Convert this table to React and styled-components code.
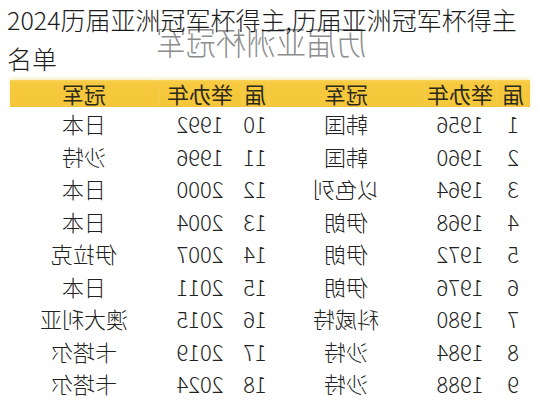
import React from "react";
import styled, { createGlobalStyle } from "styled-components";

const Global = createGlobalStyle`
  html, body { margin: 0; padding: 0; background: #ffffff; }
  body { width: 540px; height: 400px; overflow: hidden; }
`;

const Page = styled.div`
  position: relative;
  width: 540px;
  height: 400px;
  overflow: hidden;
  background: #fff;
`;

const Title = styled.h1`
  position: relative;
  z-index: 2;
  margin: 0;
  padding: 0 0 0 7px;
  font-family: "Noto Sans CJK SC", "Noto Sans", sans-serif;
  font-weight: 300;
  font-size: 25px;
  line-height: 39px;
  color: #1c1c1c;
`;

const WatermarkClip = styled.div`
  position: absolute;
  z-index: 1;
  left: 0;
  top: 29px;
  width: 540px;
  height: 30px;
  overflow: hidden;
  transform: scaleX(-1);
`;

const Watermark = styled.div`
  position: absolute;
  left: 174px;
  top: -6px;
  font-family: "Noto Sans CJK SC", sans-serif;
  font-weight: 300;
  font-size: 30px;
  line-height: 40px;
  color: #8c8c8c;
  white-space: nowrap;
  transform: scaleY(1.1);
  transform-origin: bottom;
`;

const Mirror = styled.div`
  transform: scaleX(-1);
  padding: 2px 10px 0;
`;

const Grid = styled.div`
  display: grid;
  grid-template-columns: 34px 72px 156px 26px 84px 148px;
  font-family: "Noto Sans CJK SC", sans-serif;
  font-weight: 300;
  font-size: 22px;
  color: #222;
`;

const Head = styled.div`
  height: 27px;
  line-height: 27px;
  text-align: center;
  white-space: nowrap;
  background: linear-gradient(#f9d35a 0, #f6c93e 3px, #f5c83b 24px, #f3c53c 27px);
  box-shadow: 0 -2px 3px rgba(250, 225, 140, 0.5);
  color: #2e2a1a;
  font-weight: 400;
`;

const Cell = styled.div`
  height: 32.5px;
  line-height: 32.5px;
  text-align: center;
  white-space: nowrap;
`;

const rows = [
  [1, 1956, "韩国", 10, 1992, "日本"],
  [2, 1960, "韩国", 11, 1996, "沙特"],
  [3, 1964, "以色列", 12, 2000, "日本"],
  [4, 1968, "伊朗", 13, 2004, "日本"],
  [5, 1972, "伊朗", 14, 2007, "伊拉克"],
  [6, 1976, "伊朗", 15, 2011, "日本"],
  [7, 1980, "科威特", 16, 2015, "澳大利亚"],
  [8, 1984, "沙特", 17, 2019, "卡塔尔"],
  [9, 1988, "沙特", 18, 2024, "卡塔尔"],
];

const headers = ["届", "举办年", "冠军", "届", "举办年", "冠军"];

export default function App() {
  return (
    <Page>
      <Global />
      <Title>2024历届亚洲冠军杯得主,历届亚洲冠军杯得主名单</Title>
      <WatermarkClip>
        <Watermark>历届亚洲杯冠军</Watermark>
      </WatermarkClip>
      <Mirror>
        <Grid>
          {headers.map((h, i) => (
            <Head key={"h" + i}>{h}</Head>
          ))}
          {rows.map((r, ri) =>
            r.map((v, ci) => <Cell key={ri + "-" + ci}>{v}</Cell>)
          )}
        </Grid>
      </Mirror>
    </Page>
  );
}
